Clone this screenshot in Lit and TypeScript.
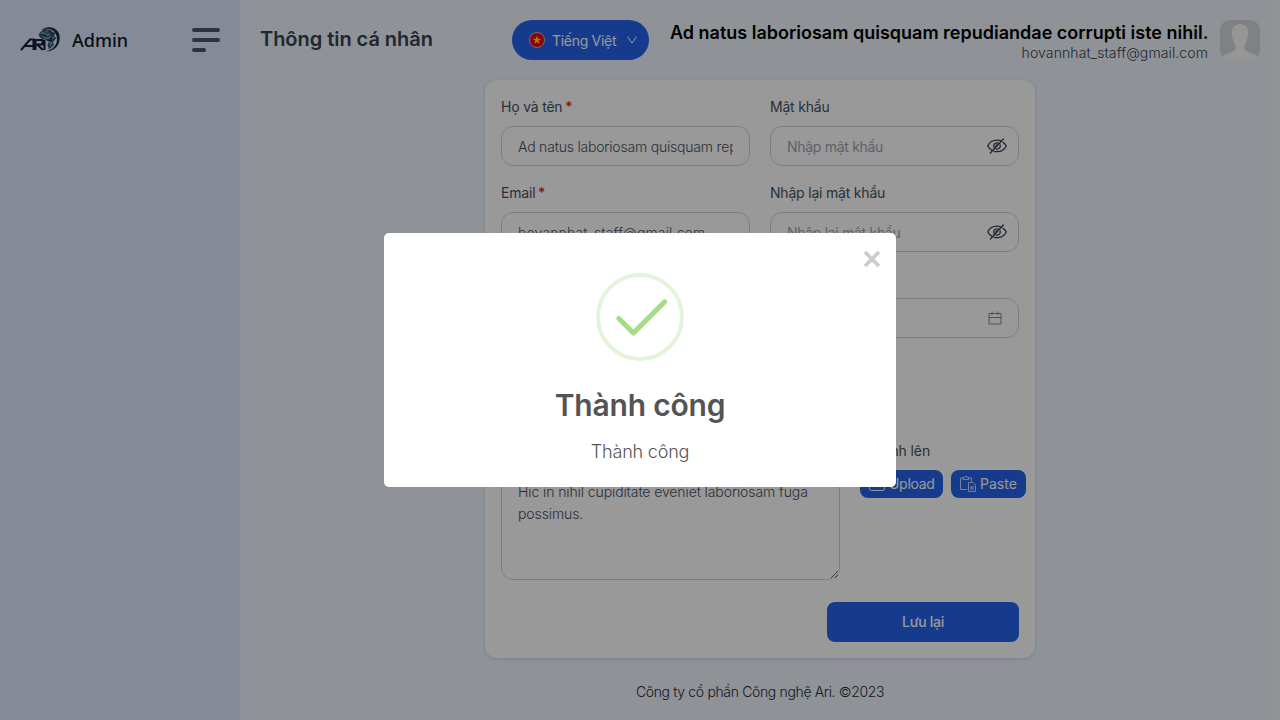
import { LitElement, html, css, svg } from "lit";
import { customElement } from "lit/decorators.js";

const eyeOff = html`<svg class="eye" width="22" height="20" viewBox="0 0 22 20" fill="none" stroke="#374151" stroke-width="1.300" stroke-linecap="round" stroke-linejoin="round">
  <path d="M6.2 14.3C4.200 13.300 2.800 12 1.700 10C3.500 6.200 7 4.200 11 4.200C12.600 4.200 13.900 4.500 15.100 5.100M17.200 6.400C18.600 7.300 19.600 8.500 20.300 10C18.500 13.800 15 15.700 11 15.700C10 15.700 9 15.600 8.200 15.300"/>
  <path d="M8.300 12C6.800 9.300 8.400 6.800 11 6.800C11.800 6.800 12.400 7 12.900 7.400M14.200 9C14.800 11.500 12.800 13.500 10.200 13.100M10 10.700A1.200 1.200 0 0 1 11 9"/>
  <path d="M4.400 17L17.400 3"/></svg>`;

const logo = svg`
  <path d="M21 5.500C27-.5 38 2 39.500 10.500C41 20 34 27 25 26.500C33 25 38 19.500 36.800 12C35.500 4.500 27.500 1.800 21 5.500Z" fill="#182944"/>
  <path d="M20 7.500L24 4L30 4.600L33 7L36 8L34 11L36.500 13L33 17L34 20L29 24.500L27.500 20L29 16.500L25 14.500L20.500 13L18.500 10Z" fill="#385777"/>
  <path d="M21 8H25L27 10.500L31 8.500M23 12L28 13.500L31 11.500L34 13M29 17L32 18L30 21M26 5.500L28 7.500" fill="none" stroke="#8fc0d4" stroke-width="1"/>
  <path d="M24 9.500L26 12M29.500 6L31.500 10M33 9.500L30 15.500M27 15L32 16" fill="none" stroke="#142640" stroke-width="1"/>
  <path d="M1 25L10 14.500H13.500V25M5 21H13.500M15.500 25V15H22.500V19.500H17L23 25M24.500 15V25" fill="none" stroke="#10203c" stroke-width="2"/>`;

@customElement("app-root")
export class AppRoot extends LitElement {
  static styles = css`
    :host { display: block; font-family: Inter, "Noto Sans", sans-serif; font-size: 14px; color: #374151; }
    * { box-sizing: border-box; }
    svg { display: block; flex: none; }
    .page { display: flex; width: 1280px; height: 720px; overflow: hidden; background: #eef6fc; }
    .side { width: 240px; background: #dde6fe; padding: 20px; }
    .brand { height: 40px; display: flex; align-items: center; }
    .logo { margin-bottom: 2px; }
    .name { margin-left: 12px; flex: 1; font: 500 18px/28px "Noto Sans", sans-serif; color: #111827; }
    .main { flex: 1; display: flex; flex-direction: column; }
    .top { height: 80px; padding: 0 20px; display: flex; align-items: center; }
    .title { flex: 1; font-size: 20px; font-weight: 600; color: #374151; letter-spacing: -0.04px; white-space: nowrap; padding-bottom: 2px; }
    .lang { width: 137px; height: 40px; border-radius: 20px; background: #2563eb; color: #fff; display: flex; align-items: center; padding: 0 12px 0 17px; font-weight: 400; }
    .lang span { margin-left: 7px; flex: 1; letter-spacing: -0.3px; white-space: nowrap; }
    .user { width: 538px; margin: 0 12px 0 21px; text-align: right; white-space: nowrap; }
    .who { font-size: 18px; line-height: 21px; font-weight: 600; color: #000; letter-spacing: 0; padding-top: 4px; }
    .mail { font-size: 14px; line-height: 20px; font-weight: 300; letter-spacing: 0.11px; }
    .card { width: 550px; height: 578px; margin: 0 auto; padding: 16px; background: #fff; border-radius: 12px; box-shadow: 0 1px 4px rgba(60,90,150,.2); }
    .grid { display: grid; grid-template-columns: 249px 249px; column-gap: 20px; row-gap: 20px; height: 344px; align-content: start; }
    .field { height: 66px; }
    .date { grid-column: 2; }
    .label { display: block; height: 30px; line-height: 22px; letter-spacing: -0.2px; color: #465060; }
    .label b { color: #dc2626; font-weight: 500; margin-left: -1px; }
    .upload-label { letter-spacing: -0.12px; }
    .box { height: 40px; border: 1px solid #d1d5db; border-radius: 12px; display: flex; align-items: center; padding: 2px 10px 0 16px; color: #374151; }
    .box.plain { padding-right: 16px; }
    input { flex: 1; min-width: 0; width: 100%; border: 0; padding: 0; outline: 0; background: none; font: 300 14px/22px Inter, sans-serif; color: #465060; letter-spacing: -0.2px; }
    input.address { letter-spacing: 0.15px; }
    input::placeholder { color: #9ca3af; opacity: 1; font-weight: 400; letter-spacing: -0.3px; }
    .eye { margin-bottom: 3px; }
    .cal { margin: 0 6px 2px 0; }
    .lower { display: flex; gap: 20px; height: 162px; }
    textarea { display: block; width: 339px; height: 110px; border: 1px solid #d1d5db; border-radius: 12px; padding: 10px 16px; background: #fff; outline: 0; font: 300 14px/22px Inter, sans-serif; color: #465060; letter-spacing: -0.1px; }
    .note { width: 339px; }
    .btns { display: flex; gap: 8px; }
    .btn { height: 28px; border-radius: 8px; background: #2563eb; color: #fff; display: flex; align-items: center; gap: 4px; padding: 0 9px; font-size: 14px; letter-spacing: -0.3px; white-space: nowrap; }
    .btn span { padding-bottom: 2px; }
    .up { width: 83px; }
    .paste { width: 75px; letter-spacing: 0; }
    .save { width: 192px; height: 40px; margin-left: auto; padding-bottom: 2px; border-radius: 8px; background: #2563eb; color: #fff; display: grid; place-items: center; font-weight: 500; letter-spacing: -0.3px; }
    .foot { margin-top: 24px; text-align: center; line-height: 20px; font-weight: 300; color: #1f2937; letter-spacing: -0.35px; white-space: nowrap; }
    .mask { position: absolute; left: 0; top: 0; width: 1280px; height: 720px; background: rgba(0,0,0,.4); display: grid; place-items: center; }
    .dialog { position: relative; width: 512px; height: 254px; background: #fff; border-radius: 5px; display: flex; flex-direction: column; align-items: center; padding-top: 40px; color: #545454; }
    .x { position: absolute; right: 15px; top: 17px; }
    h2 { margin: 26px 0 0; font-size: 30px; line-height: 36px; font-weight: 600; color: #545454; letter-spacing: -0.2px; }
    .msg { margin-top: 17px; font-size: 18px; line-height: 24px; font-weight: 300; letter-spacing: -0.2px; }
  `;

  render() {
    return html`
      <div class="page">
        <aside class="side"><div class="brand">
          <svg class="logo" width="40" height="28" viewBox="0 0 40 28">${logo}</svg>
          <span class="name">Admin</span>
          <svg width="28" height="24" viewBox="0 0 28 24" fill="#4b5563"><rect width="28" height="4" rx="2"/><rect y="10" width="28" height="4" rx="2"/><rect y="20" width="14" height="4" rx="2"/></svg>
        </div></aside>
        <main class="main">
          <header class="top">
            <div class="title">Thông tin cá nhân</div>
            <div class="lang">
              <svg width="16" height="16" viewBox="0 0 16 16"><circle cx="8" cy="8" r="7.500" fill="#e3001b" stroke="#e9a5b0"/><path d="M8 3.400L9.100 6.700H12.500L9.800 8.800L10.800 12L8 10L5.200 12L6.200 8.800L3.500 6.700H6.900Z" fill="#ffda00"/></svg>
              <span>Tiếng Việt</span>
              <svg width="10" height="8" viewBox="0 0 10 8" fill="none" stroke="#fff"><path d="M.5.500L5 7L9.500.500"/></svg>
            </div>
            <div class="user"><div class="who">Ad natus laboriosam quisquam repudiandae corrupti iste nihil.</div><div class="mail">hovannhat_staff@gmail.com</div></div>
            <svg width="40" height="40" viewBox="0 0 40 40"><defs><clipPath id="av"><rect width="40" height="40" rx="10"/></clipPath></defs><g clip-path="url(#av)"><rect width="40" height="40" fill="#d5d7d9"/><path d="M20 4C14.500 4 11.500 7.500 12 13C12 19 13.500 22 15.500 24.500V29C14 32.500 5 33.500 1.500 37V40H38.500V37C35 33.500 26 32.500 24.500 29V24.500C26.500 22 28 19 28 13C28.500 7.500 25.500 4 20 4Z" fill="#fbfbfb"/></g></svg>
          </header>
          <section class="card">
            <div class="grid">
              <div class="field"><label class="label">Họ và tên <b>*</b></label><div class="box plain"><input .value=${"Ad natus laboriosam quisquam repudiandae corrupti iste nihil."} /></div></div>
              <div class="field"><label class="label">Mật khẩu</label><div class="box"><input placeholder="Nhập mật khẩu" />${eyeOff}</div></div>
              <div class="field"><label class="label">Email <b>*</b></label><div class="box plain"><input class="address" .value=${"hovannhat_staff@gmail.com"} /></div></div>
              <div class="field"><label class="label">Nhập lại mật khẩu</label><div class="box"><input placeholder="Nhập lại mật khẩu" />${eyeOff}</div></div>
              <div class="field date"><div class="label"></div><div class="box"><input />
                <svg class="cal" width="14" height="14" viewBox="0 0 14 14" fill="none" stroke="#8a8a8a"><path d="M1 2.500H13V13H1ZM1 6.500H13M4 .500V4M10 .500V4"/></svg></div></div>
            </div>
            <div class="lower">
              <div class="note"><div class="label"></div><textarea .value=${"Hic in nihil cupiditate eveniet laboriosam fuga possimus."}></textarea></div>
              <div><div class="label upload-label">Tải ảnh lên</div><div class="btns">
                <div class="btn up"><svg width="16" height="16" viewBox="0 0 16 16" fill="none" stroke="#fff"><rect x=".5" y="1.500" width="15" height="13" rx="2"/><path d="M8 11V5M5.500 7L8 4.500L10.500 7"/></svg><span>Upload</span></div>
                <div class="btn paste"><svg width="16" height="16" viewBox="0 0 16 16" fill="none" stroke="#dbe5ff" stroke-width=".9"><path d="M7 13.500H.5V2H3M9 2H11.500V5.500M3 3.500V1.500H4.500L5 .500H7L7.500 1.500H9V3.500Z"/><path d="M8.500 6.500H13L15.500 9V15.500H8.500Z"/><rect x="10" y="10" width="4" height="4" fill="#8eabf2" stroke="none"/></svg><span>Paste</span></div>
              </div></div>
            </div>
            <div class="save">Lưu lại</div>
          </section>
          <footer class="foot">Công ty cổ phần Công nghệ Ari. ©2023</footer>
        </main>
      </div>
      <div class="mask"><div class="dialog">
        <svg class="x" width="18" height="18" viewBox="0 0 18 18" stroke="#ccc" stroke-width="3.600"><path d="M2 2L16 16M16 2L2 16"/></svg>
        <svg width="88" height="88" viewBox="0 0 88 88" fill="none"><circle cx="44" cy="44" r="42" stroke="#e4f4db" stroke-width="4"/><path d="M22.800 45.500L37.400 60L68.600 28.800" stroke="#a5dc86" stroke-width="5" stroke-linecap="round" stroke-linejoin="round"/></svg>
        <h2>Thành công</h2>
        <div class="msg">Thành công</div>
      </div></div>`;
  }
}
